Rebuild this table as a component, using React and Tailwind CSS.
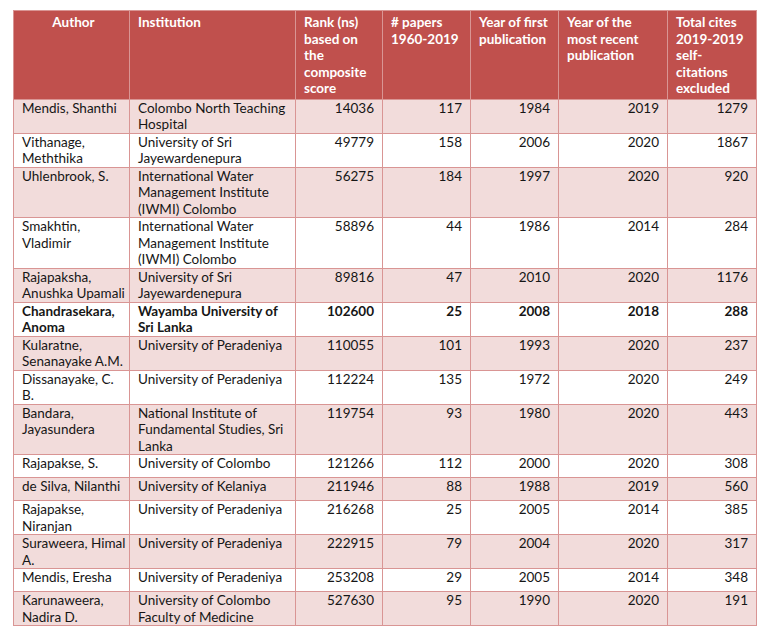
import React from "react";

const rows = [
  ["Mendis, Shanthi", "Colombo North Teaching Hospital", "14036", "117", "1984", "2019", "1279"],
  ["Vithanage, Meththika", "University of Sri Jayewardenepura", "49779", "158", "2006", "2020", "1867"],
  ["Uhlenbrook, S.", "International Water Management Institute (IWMI) Colombo", "56275", "184", "1997", "2020", "920"],
  ["Smakhtin, Vladimir", "International Water Management Institute (IWMI) Colombo", "58896", "44", "1986", "2014", "284"],
  ["Rajapaksha, Anushka Upamali", "University of Sri Jayewardenepura", "89816", "47", "2010", "2020", "1176"],
  ["Chandrasekara, Anoma", "Wayamba University of Sri Lanka", "102600", "25", "2008", "2018", "288", true],
  ["Kularatne, Senanayake A.M.", "University of Peradeniya", "110055", "101", "1993", "2020", "237"],
  ["Dissanayake, C. B.", "University of Peradeniya", "112224", "135", "1972", "2020", "249"],
  ["Bandara, Jayasundera", "National Institute of Fundamental Studies, Sri Lanka", "119754", "93", "1980", "2020", "443"],
  ["Rajapakse, S.", "University of Colombo", "121266", "112", "2000", "2020", "308"],
  ["de Silva, Nilanthi", "University of Kelaniya", "211946", "88", "1988", "2019", "560"],
  ["Rajapakse, Niranjan", "University of Peradeniya", "216268", "25", "2005", "2014", "385"],
  ["Suraweera, Himal A.", "University of Peradeniya", "222915", "79", "2004", "2020", "317"],
  ["Mendis, Eresha", "University of Peradeniya", "253208", "29", "2005", "2014", "348"],
  ["Karunaweera, Nadira D.", "University of Colombo Faculty of Medicine", "527630", "95", "1990", "2020", "191"],
];

const headers = [
  "Author",
  "Institution",
  "Rank (ns) based on the composite score",
  "# papers 1960-2019",
  "Year of first publication",
  "Year of the most recent publication",
  "Total cites 2019-2019 self-citations excluded",
];

const widths = ["w-[116px]", "w-[166px]", "w-[87px]", "w-[88px]", "w-[88px]", "w-[109px]", "w-[89px]"];

export default function App() {
  return (
    <div className="bg-white w-[768px] h-[638px] pt-[10px] pl-[13px] font-['Lato',sans-serif] text-[13.5px] leading-[16.5px] text-[#161616]">
      <table className="border-collapse table-fixed w-[743px]">
        <colgroup>
          {widths.map((w, i) => (
            <col key={i} className={w} />
          ))}
        </colgroup>
        <thead>
          <tr className="bg-[#c0504d] text-white h-[88px]">
            {headers.map((h, i) => (
              <th
                key={i}
                className={
                  "border border-[#d99594] align-top pt-[3px] pb-[2px] pl-[8px] pr-[4px] font-bold " +
                  (i === 0 ? "text-center" : "text-left")
                }
              >
                {h}
              </th>
            ))}
          </tr>
        </thead>
        <tbody>
          {rows.map((r, i) => (
            <tr key={i} className={(i % 2 === 0 ? "bg-[#f2dcdb]" : "bg-white") + (r[7] ? " font-bold" : "")}>
              {r.slice(0, 7).map((c, j) => (
                <td
                  key={j}
                  className={
                    "border border-[#d99594] align-top h-[23px] p-0 " +
                    (j < 2 ? "text-left pl-[8px] pr-[2px]" : "text-right pr-[8px]")
                  }
                >
                  {c}
                </td>
              ))}
            </tr>
          ))}
        </tbody>
      </table>
    </div>
  );
}
